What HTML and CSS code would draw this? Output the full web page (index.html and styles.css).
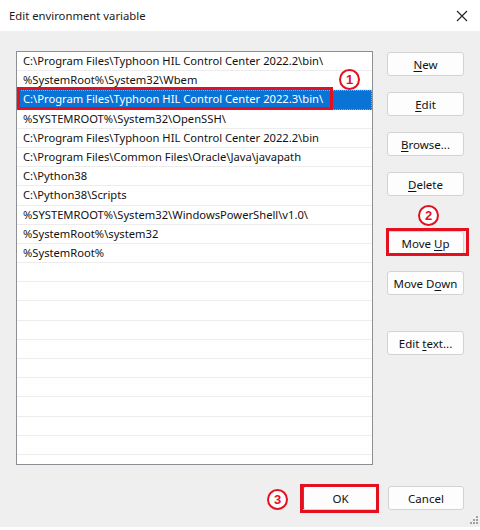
FILE: index.html
```html
<!DOCTYPE html>
<html>
<head>
<meta charset="utf-8">
<link rel="stylesheet" href="styles.css">
</head>
<body>
<div class="window">
  <div class="titlebar">
    <span class="title">Edit environment variable</span>
    <svg class="close" width="12" height="12" viewBox="0 0 12 12"><path d="M1 1L11 11M11 1L1 11" stroke="#222" stroke-width="1.1" fill="none"/></svg>
  </div>
  <div class="body">
    <div class="main">
      <div class="list">
        <div class="row">C:\Program Files\Typhoon HIL Control Center 2022.2\bin\</div>
        <div class="row">%SystemRoot%\System32\Wbem</div>
        <div class="row selected">C:\Program Files\Typhoon HIL Control Center 2022.3\bin\</div>
        <div class="row">%SYSTEMROOT%\System32\OpenSSH\</div>
        <div class="row">C:\Program Files\Typhoon HIL Control Center 2022.2\bin</div>
        <div class="row">C:\Program Files\Common Files\Oracle\Java\javapath</div>
        <div class="row">C:\Python38</div>
        <div class="row">C:\Python38\Scripts</div>
        <div class="row">%SYSTEMROOT%\System32\WindowsPowerShell\v1.0\</div>
        <div class="row">%SystemRoot%\system32</div>
        <div class="row">%SystemRoot%</div>
        <div class="row"></div>
        <div class="row"></div>
        <div class="row"></div>
        <div class="row"></div>
        <div class="row"></div>
        <div class="row"></div>
        <div class="row"></div>
        <div class="row"></div>
        <div class="row"></div>
        <div class="row"></div>
      </div>
      <div class="buttons">
        <button class="btn"><u>N</u>ew</button>
        <button class="btn"><u>E</u>dit</button>
        <button class="btn"><u>B</u>rowse...</button>
        <button class="btn"><u>D</u>elete</button>
        <button class="btn gap1">Move <u>U</u>p</button>
        <button class="btn">Move D<u>o</u>wn</button>
        <button class="btn gap2">Edit <u>t</u>ext...</button>
      </div>
    </div>
    <div class="footer">
      <button class="btn ok">OK</button>
      <button class="btn">Cancel</button>
    </div>
    <div class="grip">
      <svg width="8" height="8" viewBox="0 0 8 8"><g fill="#a0a0a0"><rect x="6" y="0" width="2" height="2"/><rect x="3" y="3" width="2" height="2"/><rect x="6" y="3" width="2" height="2"/><rect x="0" y="6" width="2" height="2"/><rect x="3" y="6" width="2" height="2"/><rect x="6" y="6" width="2" height="2"/></g></svg>
    </div>
  </div>
  <div class="mark box1"></div>
  <div class="mark box2"></div>
  <div class="mark box3"></div>
  <div class="num n1">1</div>
  <div class="num n2">2</div>
  <div class="num n3">3</div>
</div>
</body>
</html>
```
FILE: styles.css
```css
* { box-sizing: border-box; }
html, body { margin: 0; padding: 0; background: #fff; }
body { font-family: "Noto Sans", "Open Sans", sans-serif; font-size: 11.2px; color: #000; }

.window {
  position: relative;
  width: 480px;
  height: 530px;
  background: #fff;
  overflow: hidden;
}

.titlebar {
  height: 31px;
  display: flex;
  align-items: center;
  justify-content: space-between;
  padding: 0 12px 0 9px;
  background: #fff;
}
.title { font-size: 11.3px; color: #1a1a1a; }
.close { display: block; }

.body {
  position: relative;
  height: 496px;
  background: #efefef;
  padding: 20px 16px 0 16px;
}

.main {
  display: flex;
  gap: 14px;
}

.list {
  width: 358px;
  height: 414px;
  background: #fff;
  border: 1px solid #8c9095;
  overflow: hidden;
}
.row {
  height: 19.2px;
  line-height: 18px;
  padding-left: 6px;
  border-bottom: 1px solid #ececec;
  white-space: nowrap;
  color: #111;
}
.row.selected {
  background: #0a74d6;
  color: #fff;
  border: 1px dotted #e39a3f;
  border-left: none;
  line-height: 16px;
}

.buttons {
  display: flex;
  flex-direction: column;
  gap: 16px;
  padding-top: 1px;
}
.btn {
  font-family: inherit;
  font-size: 11.5px;
  color: #111;
  width: 77px;
  height: 24px;
  background: #fdfdfd;
  border: 1px solid #d3d3d3;
  border-radius: 3px;
  padding: 0;
}
.btn u { text-decoration-thickness: 1px; text-underline-offset: 2px; }
.gap1 { margin-top: 19px; }
.gap2 { margin-top: 20px; }

.footer {
  display: flex;
  justify-content: flex-end;
  gap: 10px;
  margin-top: 21px;
}
.footer .btn { width: 76px; }
.btn.ok { border-left: 2px solid #0a74d6; }

.grip {
  position: absolute;
  right: 2px;
  bottom: 3px;
  line-height: 0;
}

.mark {
  position: absolute;
  border: 3px solid #e4101f;
}
.box1 { left: 17px; top: 87px; width: 316px; height: 23px; }
.box2 { left: 386px; top: 228px; width: 83px; height: 28px; }
.box3 { left: 300px; top: 484px; width: 79px; height: 29px; }

.num {
  position: absolute;
  width: 21px;
  height: 21px;
  border: 2px solid #e4101f;
  border-radius: 50%;
  background: #fff;
  color: #e4101f;
  font-family: "Liberation Sans", Arial, sans-serif;
  font-weight: bold;
  font-size: 13px;
  line-height: 17px;
  text-align: center;
}
.n1 { left: 339px; top: 69px; }
.n2 { left: 418px; top: 205px; }
.n3 { left: 267px; top: 489px; }
```
